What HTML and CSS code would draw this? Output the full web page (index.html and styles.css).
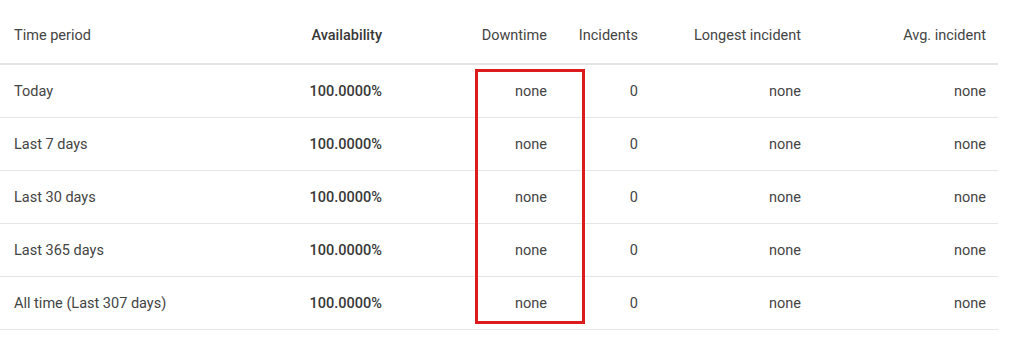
FILE: index.html
```html
<!DOCTYPE html>
<html>
<head>
<meta charset="utf-8">
<link rel="stylesheet" href="styles.css">
</head>
<body>
<div class="wrap">
  <div class="table">
    <div class="row head">
      <div class="c c1">Time period</div>
      <div class="c c2 strong">Availability</div>
      <div class="c c3">Downtime</div>
      <div class="c c4">Incidents</div>
      <div class="c c5">Longest incident</div>
      <div class="c c6">Avg. incident</div>
    </div>
    <div class="row">
      <div class="c c1">Today</div>
      <div class="c c2 strong">100.0000%</div>
      <div class="c c3">none</div>
      <div class="c c4">0</div>
      <div class="c c5">none</div>
      <div class="c c6">none</div>
    </div>
    <div class="row">
      <div class="c c1">Last 7 days</div>
      <div class="c c2 strong">100.0000%</div>
      <div class="c c3">none</div>
      <div class="c c4">0</div>
      <div class="c c5">none</div>
      <div class="c c6">none</div>
    </div>
    <div class="row">
      <div class="c c1">Last 30 days</div>
      <div class="c c2 strong">100.0000%</div>
      <div class="c c3">none</div>
      <div class="c c4">0</div>
      <div class="c c5">none</div>
      <div class="c c6">none</div>
    </div>
    <div class="row">
      <div class="c c1">Last 365 days</div>
      <div class="c c2 strong">100.0000%</div>
      <div class="c c3">none</div>
      <div class="c c4">0</div>
      <div class="c c5">none</div>
      <div class="c c6">none</div>
    </div>
    <div class="row">
      <div class="c c1">All time (Last 307 days)</div>
      <div class="c c2 strong">100.0000%</div>
      <div class="c c3">none</div>
      <div class="c c4">0</div>
      <div class="c c5">none</div>
      <div class="c c6">none</div>
    </div>
  </div>
  <div class="highlight"></div>
</div>
</body>
</html>
```

FILE: styles.css
```css
html, body {
  margin: 0;
  padding: 0;
  background: #ffffff;
}
body {
  font-family: Roboto, "Liberation Sans", Arial, sans-serif;
  font-size: 14.5px;
  color: #444444;
}
.wrap {
  position: relative;
  width: 1022px;
  height: 338px;
}
.table {
  width: 998px;
  display: flex;
  flex-direction: column;
}
.row {
  display: grid;
  grid-template-columns: 200px 194px 165px 91px 163px 185px;
  height: 52px;
  border-bottom: 1px solid #e6e6e6;
  align-items: center;
}
.row.head {
  height: 55px;
  padding-top: 8px;
  border-bottom: 2px solid #e4e4e4;
}
.c {
  text-align: right;
  padding-right: 12px;
  white-space: nowrap;
}
.c1 {
  text-align: left;
  padding-left: 14px;
  padding-right: 0;
}
.strong {
  font-weight: 500;
  color: #383838;
}
.highlight {
  position: absolute;
  left: 475px;
  top: 69px;
  width: 104px;
  height: 249px;
  border: 3px solid #dc1c1c;
}
```
